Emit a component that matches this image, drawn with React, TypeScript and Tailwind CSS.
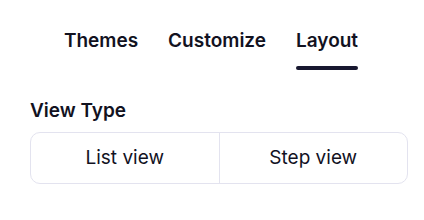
import { useState } from "react"

const TABS = ["Themes", "Customize", "Layout"]
const VIEWS = ["List view", "Step view"]

export default function App() {
  const [tab, setTab] = useState("Layout")

  return (
    <div className="h-[220px] w-[424px] bg-white font-['Inter',sans-serif] text-[#12121f]">
      {/* Tabs */}
      <nav className="flex justify-center gap-[30px] pt-[29px] pr-[2px]">
        {TABS.map((t) => (
          <button
            key={t}
            onClick={() => setTab(t)}
            className="flex flex-col items-stretch text-[19px] font-semibold leading-[24px]"
          >
            <span>{t}</span>
            <span
              className={`mt-[13px] h-[4px] rounded-full ${
                tab === t ? "bg-[#17172f]" : "bg-transparent"
              }`}
            />
          </button>
        ))}
      </nav>

      {/* View type */}
      <div className="pl-[30px] pr-[16px] pt-[29px]">
        <p className="text-[19px] font-semibold leading-[24px]">View Type</p>
        <div className="mt-[9px] flex h-[52px] rounded-[10px] border border-[#e3e3ef]">
          {VIEWS.map((v, i) => (
            <button
              key={v}
              className={`flex flex-1 items-center justify-center text-[19px] ${
                i > 0 ? "border-l border-[#e3e3ef]" : ""
              }`}
            >
              {v}
            </button>
          ))}
        </div>
      </div>
    </div>
  )
}
